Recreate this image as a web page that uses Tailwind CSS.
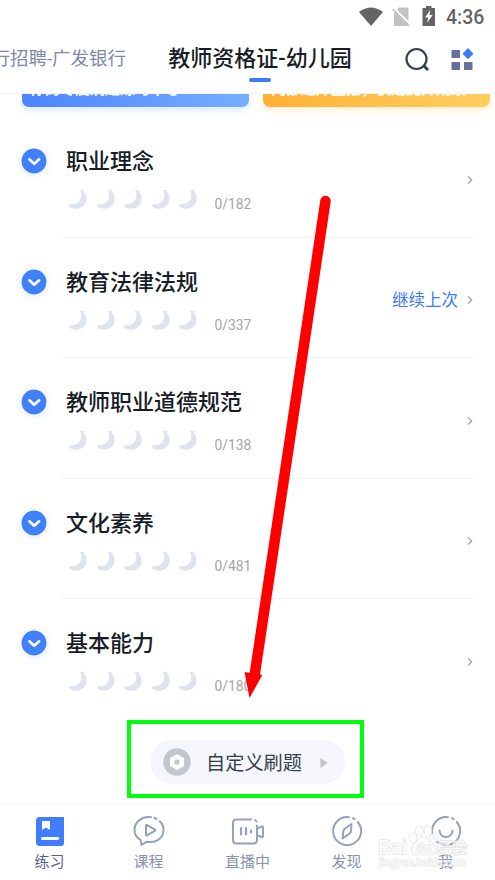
<!doctype html>
<html lang="zh-CN">
  <head>
    <meta charset="UTF-8" />
    <meta name="viewport" content="width=device-width, initial-scale=1.0" />
    <title>教师资格证-幼儿园</title>
    <script src="https://cdn.jsdelivr.net/npm/@tailwindcss/browser@4"></script>
  </head>

  <body class="bg-white font-['Roboto','Noto_Sans_CJK_SC',sans-serif] text-[#171d26]">
    <!-- shared icons -->
    <svg class="hidden">
      <symbol id="moon" viewBox="0 0 20 21">
        <path d="M11.800 1.200 13 .8l1.500.5 1.700-.7.3 1.200-1 .7c2.400 2.100 3.500 5 3.100 8.300-.7 5-4.500 8.800-10.200 8.900C5 19.800 2.200 18.800 1.200 17.200c-.5-1.300.1-2 1.300-1.900 4.500.3 8.300-1.500 10-5.300 1-2.400.9-5.100.5-7.600l-1.200-.3z" fill="#dfe3ed" />
      </symbol>
      <symbol id="chevron" viewBox="0 0 6 10">
        <path d="M1 1.300 4.800 5 1 8.700" fill="none" stroke="#999" stroke-width="1.100" />
      </symbol>
      <symbol id="toggle" viewBox="0 0 26 26">
        <circle cx="13" cy="13" r="12.500" fill="#4080fb" />
        <path d="m8.300 11.300 4.900 4.500 4.900-4.500" fill="none" stroke="#fff" stroke-width="2.600" stroke-linecap="round" stroke-linejoin="round" />
      </symbol>
    </svg>

    <div class="relative flex flex-col w-[495px] h-[880px] overflow-hidden">
      <header class="h-[94px] shrink-0 border-b border-[#f4f4f6]">
        <div class="flex justify-end items-center h-8 pr-[11px] text-[#646464]">
          <svg class="mt-px w-6 h-5" viewBox="0 0 24 20"><path d="M0 5Q12-4 24 5L12 19z" fill="#646464" /></svg>
          <svg class="ml-[9px] mt-px w-[18px] h-5" viewBox="0 0 18 20">
            <path d="M7 .5h8q1.500 0 1.500 1.500v16q0 1-1.500 1H3.500q-1.500 0-1.500-1V6z" fill="#c2c2c2" />
            <path d="m2 1 16 16" stroke="#fff" stroke-width="1.800" />
            <path d="m.5 2 17 17" stroke="#c2c2c2" stroke-width="1.500" />
          </svg>
          <svg class="ml-3 w-[14px] h-5" viewBox="0 0 14 20">
            <path d="M4 0h5.500v2H13v18H.5V2H4z" fill="#646464" />
            <path d="M8.300 4 3 11.500h3.300L5 17l5.700-8H7.500z" fill="#fff" />
          </svg>
          <span class="ml-[10px] mt-[3px] w-[38px] text-[19.500px] leading-none font-medium whitespace-nowrap">4:36</span>
        </div>
        <div class="flex items-start h-[62px]">
          <div class="flex justify-end w-[126px] shrink-0 overflow-hidden whitespace-nowrap pt-[13px] text-[18.500px] leading-7 text-[#8189a7]">银行招聘-广发银行</div>
          <div class="ml-[42px] flex flex-col items-center w-[184px] shrink-0">
            <h1 class="pt-[13px] text-[22px] leading-7 font-medium whitespace-nowrap">教师资格证-幼儿园</h1>
            <div class="mt-[5px] w-[22px] h-[4px] rounded-full bg-[#3d7afa]"></div>
          </div>
          <svg class="mt-[15px] ml-[53px] w-6 h-6 shrink-0" viewBox="0 0 24 24" fill="none" stroke="#35414f" stroke-width="2.200">
            <circle cx="11.500" cy="12" r="10" />
            <path d="m18.500 18.500 4.500 4.500" stroke-width="2.800" />
          </svg>
          <svg class="mt-[15px] ml-[22px] w-[23px] h-6 shrink-0" viewBox="0 0 23 24">
            <path d="M.5 3h8.500v8H.5zM.5 15h8.500v8H.5zM13 15h8.500v8H13z" fill="#66709a" />
            <path d="m17 1 5.500 5.700L17 12.300l-5.500-5.600z" fill="#3d7afa" />
          </svg>
        </div>
      </header>

      <!-- promo banners, scrolled under the header -->
      <div class="h-[23px] shrink-0 flex gap-[14px] pl-[22px] overflow-hidden text-[15px] font-bold text-white whitespace-nowrap">
        <div class="w-[227px] h-[13px] shrink-0 rounded-b-[7px] bg-linear-to-r from-[#4d83fd] to-[#76aeff] shadow-[0_3px_7px_#b8d4ff80]">
          <div class="h-[4px] overflow-hidden flex items-end pl-2 leading-[18px]"><span>你的专属刷题练习中心</span></div>
        </div>
        <div class="w-[227px] h-[13px] shrink-0 rounded-b-[7px] bg-linear-to-r from-[#ffb034] to-[#ffcf60] shadow-[0_3px_7px_#ffe0a580]">
          <div class="h-[4px] overflow-hidden flex items-end pl-2 leading-[18px]"><span>内部题库直播，快速提升成绩</span></div>
        </div>
      </div>

      <main id="chapters" class="h-[603px] shrink-0"></main>

      <div class="flex justify-center h-[84px] shrink-0">
        <button class="mt-5 flex items-center w-[195px] h-11 rounded-full bg-[#f5f6fb] pl-[13px] text-[19.200px] text-[#35404d]">
          <svg class="w-7 h-7" viewBox="0 0 28 28">
            <circle cx="14" cy="14" r="13.700" fill="#c2c7cf" />
            <path d="m14 7 6.300 3.500v7L14 21.200l-6.300-3.700v-7z" fill="#fff" stroke="#fff" stroke-width="1.500" stroke-linejoin="round" />
            <circle cx="14" cy="14" r="2.700" fill="#c2c7cf" />
          </svg>
          <span class="ml-[15px] mt-[5px] w-[96px] whitespace-nowrap">自定义刷题</span>
          <svg class="ml-[18px] mt-px w-2 h-[10px]" viewBox="0 0 8 10"><path d="M.5 0 7.500 5l-7 5z" fill="#c0c3c6" /></svg>
        </button>
      </div>

      <nav class="grid grid-cols-5 h-[76px] shrink-0 border-t border-[#f5f5f7] text-[15px] leading-5 text-[#8b93ae]">
        <a class="flex flex-col items-center pt-[10px] gap-[5px] text-[#58617f]">
          <svg class="w-8 h-8" viewBox="0 0 32 32">
            <path d="M5.500 2H30v26q0 3-3 3H5.500Q2 31 2 27.500v-22Q2 2 5.500 2z" fill="#3f7dfb" />
            <path d="M8 6h8v9l-4-2.500L8 15zM8.500 22h16q1 0 .7 1l-.5 1.200q-.3.800-1.200.8H8q-1 0-1-1v-.5q0-1.500 1.500-1.500z" fill="#fff" />
          </svg>
          练习
        </a>
        <a class="flex flex-col items-center pt-[10px] gap-[5px]">
          <svg class="w-8 h-8" viewBox="0 0 32 32" fill="none" stroke="#98a1bb" stroke-width="2" stroke-linecap="round" stroke-linejoin="round">
            <path d="M18 2.200C9 1 1.500 7 1.500 14.800c0 4.400 2.200 8 6 10.100L8.500 30l5.200-3.300C23 28.300 30.500 23.300 30.500 15c0-3.500-1.300-6.500-3.700-8.800M21.500 3l2 1" />
            <path d="M13 10.500v9.300q0 1 1 .5l8-4.600q.8-.5 0-1l-8-4.700q-1-.5-1 .5z" />
          </svg>
          课程
        </a>
        <a class="flex flex-col items-center pt-[10px] gap-[5px]">
          <svg class="w-8 h-8" viewBox="0 0 32 32" fill="none" stroke="#98a1bb" stroke-width="2" stroke-linecap="round" stroke-linejoin="round">
            <path d="M19 4.500H4.500q-3.500 0-3.500 3.500v17q0 3.500 3.500 3.500h17q3.500 0 3.500-3.500V10.500M23.300 5l1.200 1.500" />
            <path d="m26 13.500 3.500-2q1.500-.5 1.500 1v8.500q0 1.500-1.500 1l-3.500-1.500" />
            <path d="M9 13v6.500M14 13v6.500M19 15.500v2" stroke-width="2.200" />
          </svg>
          直播中
        </a>
        <a class="flex flex-col items-center pt-[10px] gap-[5px]">
          <svg class="w-8 h-8" viewBox="0 0 32 32" fill="none" stroke="#98a1bb" stroke-width="2" stroke-linecap="round" stroke-linejoin="round">
            <path d="M18 2.200A14 14 0 1 0 26.800 7M22 3.200l1.500.8" />
            <path d="m20.500 9-6 4.200q-2 1.300-2.200 3.300L11.500 23.500l6.500-4.300q1.700-1.200 2-3.200z" />
          </svg>
          发现
        </a>
        <a class="flex flex-col items-center pt-[10px] gap-[5px]">
          <svg class="w-8 h-8" viewBox="0 0 32 32" fill="none" stroke="#98a1bb" stroke-width="2" stroke-linecap="round">
            <path d="M18 2.200A14 14 0 1 0 26.800 7M22 3.200l1.500.8" />
            <path d="M9.500 15.500a6.500 6.500 0 0 0 13 0" />
          </svg>
          我
        </a>
      </nav>

      <!-- tutorial annotations -->
      <div class="absolute left-[127px] top-[720px] w-[237px] h-[78px] border-4 border-[#00ff0c]"></div>
      <svg class="absolute left-0 top-0" width="495" height="880">
        <path d="M325.500 201 254.500 676" stroke="#f00" stroke-width="10.500" stroke-linecap="round" />
        <path d="m244.500 672 17.800 3L249.500 698z" fill="#f00" />
      </svg>

      <!-- watermark -->
      <svg class="absolute left-[370px] top-[820px]" width="125" height="52" fill="#fff" stroke="#dedede" stroke-width="1.600" paint-order="stroke" opacity=".8">
        <g font-family="Liberation Sans">
          <text x="8" y="34" font-size="21" textLength="29" lengthAdjust="spacingAndGlyphs">Bai</text>
          <ellipse cx="43" cy="18" rx="3.500" ry="4.500" />
          <ellipse cx="49.500" cy="11" rx="3.500" ry="5" />
          <ellipse cx="58" cy="11" rx="3.500" ry="5" />
          <ellipse cx="64" cy="18" rx="3.500" ry="4.500" />
          <path d="M53.500 17c-4 0-5 4-8 6.500-5 3-5 11 1 11 3 0 11 0 14 0 6 0 6-8 1-11-3-2.500-4-6.500-8-6.500z" />
          <text x="46" y="32" font-size="13" textLength="15">du</text>
          <text x="9" y="45.500" font-size="11" textLength="87" lengthAdjust="spacingAndGlyphs" stroke-width="1.200">jingyan.baidu.com</text>
        </g>
        <text x="67" y="33" font-size="15" font-family="Noto Sans CJK SC">经验</text>
      </svg>
    </div>

    <script>
      const chapters = [
        { name: '职业理念', count: '0/182' },
        { name: '教育法律法规', count: '0/337', resume: true },
        { name: '教师职业道德规范', count: '0/138' },
        { name: '文化素养', count: '0/481' },
        { name: '基本能力', count: '0/180' },
      ]
      const moon = '<svg class="w-5 h-[21px]"><use href="#moon" /></svg>'

      document.getElementById('chapters').innerHTML = chapters
        .map(
          (c, i) => `
        <section class="flex h-[120.5px] pl-[21px] pr-[22px]">
          <svg class="mt-[31px] w-[26px] h-[26px] shrink-0 rounded-full shadow-[0_1px_6px_#4080fb30]"><use href="#toggle" /></svg>
          <div class="ml-[14px] flex grow pl-[5px] ${i < chapters.length - 1 ? 'border-b border-[#f3f3f4]' : ''}">
            <div class="grow pt-[29px]">
              <h2 class="text-[22px] leading-8 font-medium whitespace-nowrap">${c.name}</h2>
              <div class="mt-[11px] flex gap-[7.5px] pl-[2px]">
                ${moon.repeat(5)}
                <span class="ml-[9px] mt-[7px] text-[13.8px] leading-4 text-[#a5a5a5]">${c.count}</span>
              </div>
            </div>
            <div class="mt-[51.5px] flex items-center gap-[9px] h-[22px] text-[16.5px] text-[#3d7afa]">
              ${c.resume ? '<span class="mt-[3px]">继续上次</span>' : ''}
              <svg class="w-[6px] h-[10px]"><use href="#chevron" /></svg>
            </div>
          </div>
        </section>`
        )
        .join('')
    </script>
  </body>
</html>
